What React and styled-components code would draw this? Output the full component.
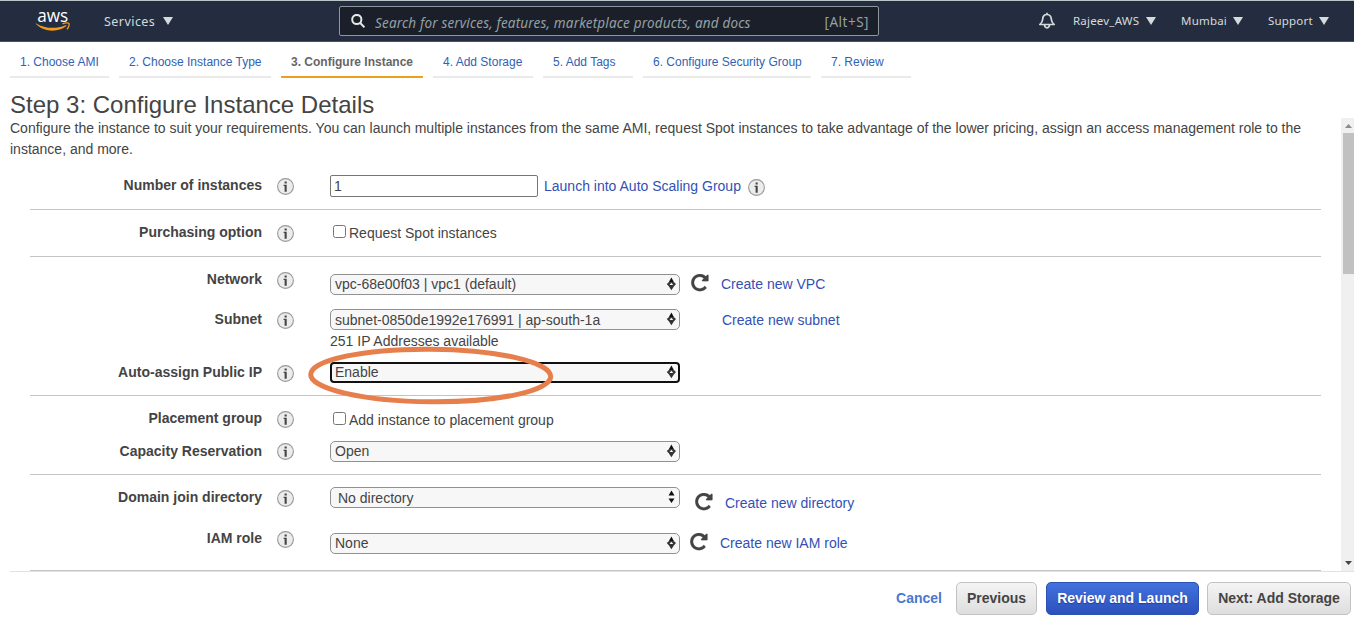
import React from "react";
import styled, { createGlobalStyle } from "styled-components";

const GlobalStyle = createGlobalStyle`
  * { box-sizing: border-box; }
  body { margin: 0; background: #fff; color: #444; font-family: "Liberation Sans", Arial, sans-serif; font-size: 14px; overflow: hidden; }
`;

const Page = styled.div`
  width: 1354px;
  height: 633px;
  display: flex;
  flex-direction: column;
  position: relative;
  overflow: hidden;
`;

const TopBar = styled.header`
  height: 42px;
  flex: none;
  display: flex;
  align-items: center;
  background: #242d40;
  border-top: 1px solid #bcc5c9;
  border-bottom: 1px solid #4b525c;
  color: #d5dbdb;
  font-family: "Noto Sans", sans-serif;
`;

const Logo = styled.svg`
  width: 36px;
  height: 38px;
  margin-left: 35px;
  flex: none;
  overflow: visible;
`;

const NavItem = styled.div`
  display: flex;
  align-items: center;
  justify-content: space-between;
  flex: none;
  width: ${(p) => p.$width}px;
  margin-left: ${(p) => p.$gap}px;
  font-size: ${(p) => p.$size || 11.5}px;
  letter-spacing: ${(p) => p.$track || 0.2}px;
  line-height: 20px;
  white-space: nowrap;
`;

const NavText = styled.span`
  padding-top: 1px;
`;

const Caret = styled.span`
  border: 5px solid transparent;
  border-top: 8px solid #d5dbdb;
  border-bottom: 0;
`;

const SearchBox = styled.div`
  width: 540px;
  height: 30px;
  flex: none;
  margin-left: 166px;
  padding: 0 9px 0 11px;
  display: flex;
  align-items: center;
  background: #1a1f29;
  border: 1px solid #8d979c;
  border-radius: 2px;
  color: #95a0a5;
  font-size: 13.5px;
  white-space: nowrap;
`;

const Placeholder = styled.em`
  margin-left: 10px;
  padding-top: 3px;
  flex: 1;
  letter-spacing: 0.17px;
`;

const Shortcut = styled.span`
  padding-top: 2px;
  letter-spacing: 0.5px;
`;

const Bell = styled.svg`
  width: 18px;
  height: 18px;
  flex: none;
  margin-left: 159px;
`;

const Tabs = styled.nav`
  height: 36px;
  flex: none;
  display: flex;
  gap: 10px;
  padding-left: 10px;
`;

const Tab = styled.a`
  width: ${(p) => p.$width}px;
  padding: 0 10px;
  line-height: 40px;
  height: 36px;
  font-size: 12px;
  white-space: nowrap;
  color: ${(p) => (p.$active ? "#666" : "#2f62b5")};
  font-weight: ${(p) => (p.$active ? 700 : 400)};
  border-bottom: 2px solid ${(p) => (p.$active ? "#ec9f1c" : "#eaeaea")};
`;

const Title = styled.h1`
  margin: 0;
  height: 40px;
  flex: none;
  padding: 13px 0 0 10px;
  font-size: 24px;
  line-height: 28px;
  font-weight: 400;
`;

const ScrollArea = styled.main`
  height: 453px;
  flex: none;
  display: flex;
  justify-content: space-between;
`;

const Content = styled.div`
  width: 1321px;
  padding-left: 10px;
`;

const Description = styled.p`
  margin: 0;
  height: 42px;
  line-height: 21px;
`;

const Section = styled.section`
  margin-left: 20px;
  border-bottom: 1px solid #c4c4c4;
`;

const Row = styled.div`
  height: ${(p) => p.$height}px;
  display: grid;
  grid-template-columns: 232px 17px 350px auto;
  align-items: start;
  justify-content: start;
`;

const Label = styled.div`
  margin-top: ${(p) => p.$top}px;
  text-align: right;
  font-weight: 700;
  line-height: 20px;
  white-space: nowrap;
`;

const InfoSlot = styled.div`
  margin: ${(p) => p.$top}px 0 0 15px;
  height: 17px;
`;

const InlineInfoSlot = styled.span`
  padding: 2px 0 0 1px;
`;

const InfoIcon = styled.svg`
  display: block;
  width: 17px;
  height: 17px;
  flex: none;
`;

const Control = styled.div`
  margin: ${(p) => p.$top}px 0 0 51px;
  width: 350px;
  display: flex;
  flex-direction: column;
`;

const Side = styled.div`
  display: flex;
  margin: ${(p) => p.$top}px 0 0 ${(p) => p.$left}px;
  gap: 13px;
  line-height: 20px;
  white-space: nowrap;
`;

const Link = styled.a`
  color: #3350b5;
  line-height: 20px;
  white-space: nowrap;
`;

const Inline = styled.div`
  display: flex;
  align-items: center;
  height: 22px;
  gap: ${(p) => p.$gap}px;
  white-space: nowrap;
`;

const CountInput = styled.input`
  width: 208px;
  height: 22px;
  flex: none;
  padding: 0 3px;
  border: 1px solid #767676;
  border-radius: 2px;
  color: #444;
  font: 14px "Liberation Sans", Arial, sans-serif;
`;

const CheckBox = styled.input`
  width: 13px;
  height: 13px;
  margin: 0 0 3px 3px;
`;

const SelectBox = styled.div`
  height: 21px;
  display: flex;
  align-items: center;
  justify-content: space-between;
  padding: 0 ${(p) => (p.$focused ? 2 : 3)}px 1px ${(p) => p.$indent || 4}px;
  background: #f7f7f7;
  border: ${(p) => (p.$focused ? "2px solid #111" : "1px solid #919191")};
  border-radius: ${(p) => (p.$focused ? 4 : 5)}px;
  white-space: nowrap;
`;

const SelectText = styled.span`
  padding-top: ${(p) => (p.$low ? 2 : 0)}px;
`;

const Hint = styled.div`
  line-height: 20px;
  margin-top: 1px;
`;

const Arrows = styled.svg`
  width: 10px;
  height: 14px;
  flex: none;
`;

const RefreshIcon = styled.svg`
  width: 18px;
  height: 18px;
  flex: none;
  margin-right: -1px;
`;

const Track = styled.div`
  width: 13px;
  background: #f0f0f0;
  display: flex;
  flex-direction: column;
  align-items: flex-end;
`;

const ScrollButton = styled.div`
  width: 13px;
  height: ${(p) => (p.$end ? 17 : 15)}px;
  display: flex;
  align-items: center;
  justify-content: center;
  margin-top: ${(p) => (p.$end ? "auto" : 0)};
  padding-left: 2px;
`;

const Thumb = styled.div`
  width: 11px;
  height: 141px;
  background: #c1c1c1;
`;

const Footer = styled.footer`
  height: 62px;
  margin-left: 10px;
  border-top: 1px solid #e2e2e2;
  display: flex;
  justify-content: flex-end;
  padding: 10px 3px 0 0;
`;

const Button = styled.button`
  height: 33px;
  width: ${(p) => p.$width}px;
  padding: 0 0 1px;
  margin-left: ${(p) => p.$gap}px;
  border-radius: 5px;
  border: 1px solid ${(p) => (p.$primary ? "#2c4fb0" : "#c2c2c2")};
  background: ${(p) => (p.$primary ? "linear-gradient(#4272de, #2c50bd)" : "linear-gradient(#f4f4f4, #dedede)")};
  color: ${(p) => (p.$primary ? "#fff" : "#444")};
  text-shadow: ${(p) => (p.$primary ? "0 1px 1px #203f91" : "none")};
  font: 700 14px "Liberation Sans", Arial, sans-serif;
  white-space: nowrap;
`;

const Cancel = styled.a`
  color: #4b78cf;
  font-weight: 700;
  line-height: 32px;
`;

const Highlight = styled.svg`
  position: absolute;
  left: 300px;
  top: 340px;
  width: 262px;
  height: 72px;
  pointer-events: none;
`;

const Info = () => (
  <InfoIcon viewBox="0 0 17 17">
    <circle cx="8.5" cy="8.5" r="7.9" fill="#ececec" stroke="#999" strokeWidth="1.1" />
    <path d="M7.6 3.6h2.100v1.9H7.600zM6.600 6.800h3.100v6.900H7.600V7.900h-1z" fill="#444" />
  </InfoIcon>
);

const Refresh = () => (
  <RefreshIcon viewBox="110 130 1600 1600">
    <path
      fill="#444"
      stroke="#444"
      strokeWidth="15"
      d="M1664 256v448q0 26-19 45t-45 19h-448q-42 0-59-40-17-39 14-69l138-138q-148-137-349-137-104 0-198.5 40.5t-163.5 109.5-109.5 163.5-40.5 198.5 40.5 198.5 109.5 163.5 163.5 109.5 198.5 40.5q119 0 225-52t179-147q7-10 23-12 15 0 25 9l137 138q9 8 9.5 20.5t-7.5 22.5q-109 132-264 204.5t-327 72.5q-156 0-298-61t-245-164-164-245-61-298 61-298 164-245 245-164 298-61q147 0 284.5 55.5t244.5 156.5l130-129q29-31 70-14 39 17 39 59z"
    />
  </RefreshIcon>
);

const Select = ({ children, focused, plain, indent, low }) => (
  <SelectBox $focused={focused} $indent={focused ? 3 : indent}>
    <SelectText $low={low}>{children}</SelectText>
    <Arrows viewBox="0 0 10 14">
      {plain ? (
        <path d="M5.500 .5l3 5h-6zM5.500 13l-3-4.500h6z" fill="#111" />
      ) : (
        <>
          <path d="M5.400 .5l2.900 5.200H2.500z" fill="#111" />
          <path d="M.8 7L2.500 5.400h5.800L10 7 8 9.200 5.400 13.300 2.800 9.200z" fill="#333" />
          <path d="M3.500 8l1.900-2.200L7.300 8z" fill="#f7f7f7" />
        </>
      )}
    </Arrows>
  </SelectBox>
);

const Field = ({ label, height, labelTop, infoTop, controlTop, side, children }) => (
  <Row $height={height}>
    <Label $top={labelTop}>{label}</Label>
    <InfoSlot $top={infoTop}><Info /></InfoSlot>
    <Control $top={controlTop}>{children}</Control>
    {side}
  </Row>
);

const SideLink = ({ top, left, refresh = true, children }) => (
  <Side $top={top} $left={left}>
    {refresh && <Refresh />}
    <Link>{children}</Link>
  </Side>
);

const steps = [
  ["1. Choose AMI", 99],
  ["2. Choose Instance Type", 152],
  ["3. Configure Instance", 142],
  ["4. Add Storage", 100],
  ["5. Add Tags", 90],
  ["6. Configure Security Group", 168],
  ["7. Review", 90],
];

export default function App() {
  return (
    <Page>
      <GlobalStyle />
      <TopBar>
        <Logo viewBox="0 0 36 38">
          <text x="2.200" y="19.500" textLength="31" lengthAdjust="spacingAndGlyphs" fontFamily="Open Sans, sans-serif" fontWeight="500" fontSize="17.500" fill="#fff">aws</text>
          <path d="M1.200 21.400C10 26.800 21 27.200 30.500 23.200c.9-.3 1.400.5.600 1.100C23 30.500 9.500 30.500.900 22c-.4-.5-.1-.9.300-.6z" fill="#f29b1d" />
          <path d="M27.500 21.900c2.500-1.300 5.700-1.300 6.500-.5.500.9-.2 4-2.100 5.900" fill="none" stroke="#f29b1d" strokeWidth="1.300" />
        </Logo>
        <NavItem $width={69} $gap={33} $size={12.5} $track={0.45}><NavText>Services</NavText><Caret /></NavItem>
        <SearchBox>
          <svg width="14" height="14" viewBox="0 0 14 14" fill="none" stroke="#e4e8e8" strokeWidth="2">
            <circle cx="5.800" cy="5.500" r="4.600" />
            <path d="M9 8.800l4.400 4.500" />
          </svg>
          <Placeholder>Search for services, features, marketplace products, and docs</Placeholder>
          <Shortcut>[Alt+S]</Shortcut>
        </SearchBox>
        <Bell viewBox="0 0 18 18" fill="none" stroke="#d5dbdb" strokeWidth="1.700" strokeLinejoin="round">
          <path d="M9 2.500c-3 0-4.300 2.200-4.300 4.700 0 2.300-1.200 3.700-2.900 5.300h14.400c-1.700-1.600-2.900-3-2.900-5.300C13.300 4.700 12 2.500 9 2.500zM9 .8v1.700M6.500 12.800c.2 4 4.800 4 5 0" />
        </Bell>
        <NavItem $width={83} $gap={17}>Rajeev_AWS<Caret /></NavItem>
        <NavItem $width={62} $gap={25}>Mumbai<Caret /></NavItem>
        <NavItem $width={61} $gap={25}>Support<Caret /></NavItem>
      </TopBar>

      <Tabs>
        {steps.map(([name, width], i) => (
          <Tab key={name} $width={width} $active={i === 2}>{name}</Tab>
        ))}
      </Tabs>
      <Title>Step 3: Configure Instance Details</Title>

      <ScrollArea>
        <Content>
          <Description>
            Configure the instance to suit your requirements. You can launch multiple instances from the same AMI, request Spot instances to take advantage of the lower pricing, assign an access management role to the instance, and more.
          </Description>
          <Section>
            <Field label="Number of instances" height={49} labelTop={15} infoTop={18} controlTop={15}>
              <Inline $gap={6}>
                <CountInput defaultValue="1" />
                <Link>Launch into Auto Scaling Group</Link>
                <InlineInfoSlot><Info /></InlineInfoSlot>
              </Inline>
            </Field>
          </Section>
          <Section>
            <Field label="Purchasing option" height={46} labelTop={12} infoTop={15} controlTop={12}>
              <Inline $gap={3}><CheckBox type="checkbox" />Request Spot instances</Inline>
            </Field>
          </Section>
          <Section>
            <Field label="Network" height={43} labelTop={12} infoTop={15} controlTop={17}
              side={<SideLink top={17} left={62}>Create new VPC</SideLink>}>
              <Select>vpc-68e00f03 | vpc1 (default)</Select>
            </Field>
            <Field label="Subnet" height={53} labelTop={9} infoTop={12} controlTop={9}
              side={<SideLink top={10} left={93} refresh={false}>Create new subnet</SideLink>}>
              <Select low>subnet-0850de1992e176991 | ap-south-1a</Select>
              <Hint>251 IP Addresses available</Hint>
            </Field>
            <Field label="Auto-assign Public IP" height={42} labelTop={9} infoTop={12} controlTop={9}>
              <Select focused>Enable</Select>
            </Field>
          </Section>
          <Section>
            <Field label="Placement group" height={39} labelTop={12} infoTop={15} controlTop={13}>
              <Inline $gap={3}><CheckBox type="checkbox" />Add instance to placement group</Inline>
            </Field>
            <Field label="Capacity Reservation" height={39} labelTop={6} infoTop={8} controlTop={6}>
              <Select>Open</Select>
            </Field>
          </Section>
          <Section>
            <Field label="Domain join directory" height={45} labelTop={12} infoTop={15} controlTop={12}
              side={<SideLink top={18} left={66}>Create new directory</SideLink>}>
              <Select plain low indent={7}>No directory</Select>
            </Field>
            <Field label="IAM role" height={50} labelTop={8} infoTop={11} controlTop={13}
              side={<SideLink top={13} left={61}>Create new IAM role</SideLink>}>
              <Select>None</Select>
            </Field>
          </Section>
        </Content>
        <Track>
          <ScrollButton>
            <svg width="7" height="4" viewBox="0 0 7 4"><path d="M0 4L3.500 0 7 4z" fill="#8a8a8a" /></svg>
          </ScrollButton>
          <Thumb />
          <ScrollButton $end>
            <svg width="7" height="4" viewBox="0 0 7 4"><path d="M0 0h7L3.500 4z" fill="#444" /></svg>
          </ScrollButton>
        </Track>
      </ScrollArea>

      <Footer>
        <Cancel>Cancel</Cancel>
        <Button $width={81} $gap={14}>Previous</Button>
        <Button $width={153} $gap={9} $primary>Review and Launch</Button>
        <Button $width={144} $gap={8}>Next: Add Storage</Button>
      </Footer>

      <Highlight viewBox="0 0 262 72">
        <ellipse cx="130.700" cy="35.500" rx="120" ry="26.300" transform="rotate(.5 130.700 35.500)" fill="none" stroke="#e67f4b" strokeWidth="5" />
      </Highlight>
    </Page>
  );
}
